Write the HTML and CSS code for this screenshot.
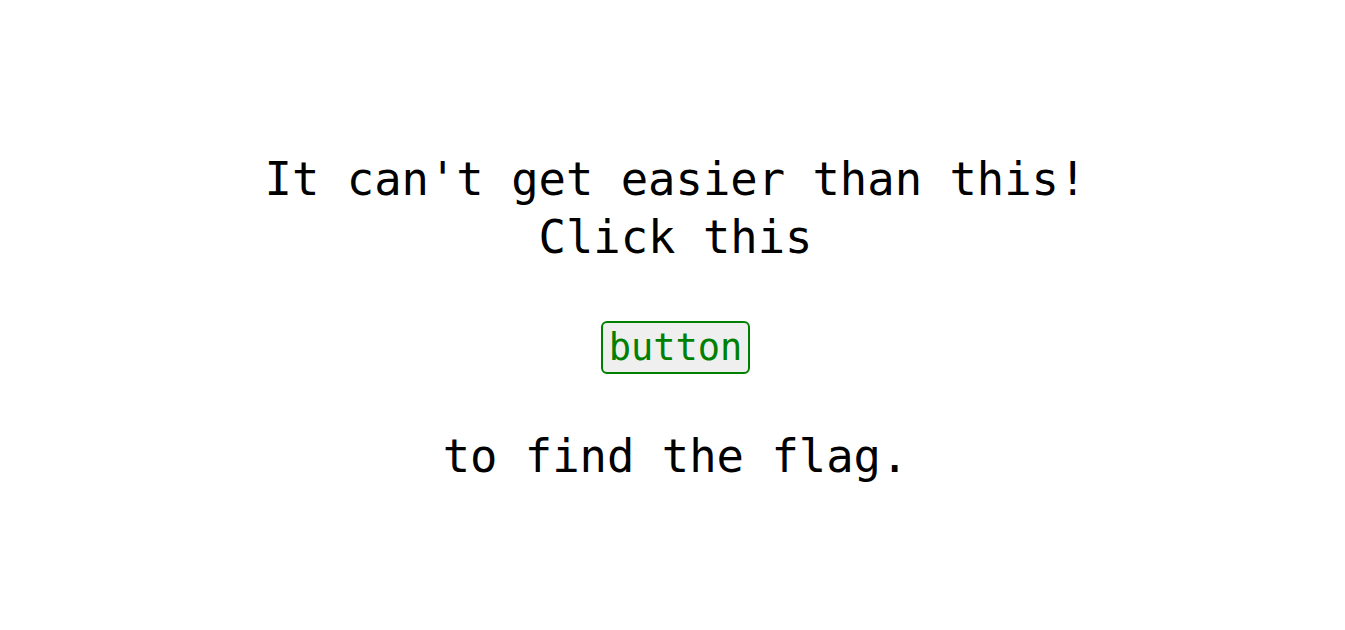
FILE: index.html
```html
<!DOCTYPE html>
<html>
<head>
<meta charset="utf-8">
<link rel="stylesheet" href="styles.css">
</head>
<body>
<main class="page">
  <h1 class="title">It can't get easier than this!<br>Click this</h1>
  <button class="btn">button</button>
  <p class="tail">to find the flag.</p>
</main>
</body>
</html>
```

FILE: styles.css
```css
html, body {
  margin: 0;
  padding: 0;
  background: #ffffff;
}
.page {
  display: flex;
  flex-direction: column;
  align-items: center;
  padding-top: 151px;
  padding-left: 6px;
  font-family: "DejaVu Sans Mono", "Liberation Mono", monospace;
  color: #000;
}
.title {
  margin: 0;
  font-size: 45.5px;
  font-weight: normal;
  line-height: 58px;
  text-align: center;
}
.btn {
  margin-top: 54px;
  font-family: "DejaVu Sans Mono", "Liberation Mono", monospace;
  font-size: 37px;
  line-height: 47px;
  padding: 0 6px;
  color: #008000;
  background: #efefef;
  border: 2px solid #008000;
  border-radius: 6px;
  height: 53px;
  box-sizing: border-box;
}
.tail {
  margin: 54px 0 0;
  font-size: 45.5px;
  line-height: 58px;
}
```
